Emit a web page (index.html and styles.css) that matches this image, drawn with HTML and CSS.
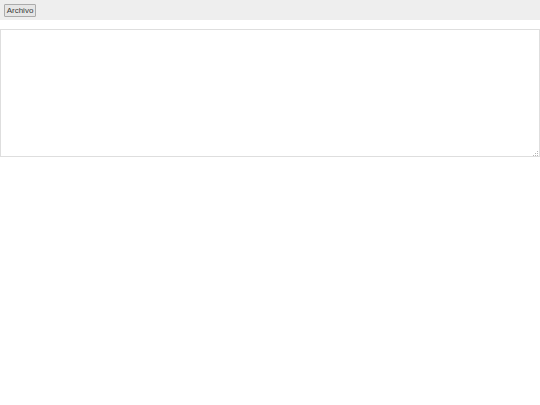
FILE: index.html
```html
<!DOCTYPE html>
<html>
<head>
<meta charset="utf-8">
<link rel="stylesheet" href="styles.css">
</head>
<body>
<div class="toolbar"><button class="menu-btn">Archivo</button></div>
<div class="editor-wrap">
  <textarea class="editor"></textarea>
  <svg class="grip" width="6" height="6" viewBox="0 0 6 6">
    <rect x="4" y="0" width="1" height="1" fill="#b5b5b5"/>
    <rect x="2" y="2" width="1" height="1" fill="#b5b5b5"/>
    <rect x="4" y="2" width="1" height="1" fill="#b5b5b5"/>
    <rect x="0" y="4" width="1" height="1" fill="#b5b5b5"/>
    <rect x="2" y="4" width="1" height="1" fill="#b5b5b5"/>
    <rect x="4" y="4" width="1" height="1" fill="#b5b5b5"/>
  </svg>
</div>
</body>
</html>
```
FILE: styles.css
```css
html, body { margin: 0; padding: 0; background: #fff; }
body { font-family: "Liberation Sans", Arial, sans-serif; }
.toolbar {
  background: #eeeeee;
  height: 20px;
  box-sizing: border-box;
  padding: 4px;
  display: flex;
  align-items: flex-start;
}
.menu-btn {
  font-family: "Liberation Sans", Arial, sans-serif;
  font-size: 8px;
  font-weight: normal;
  height: 13px;
  width: 32px;
  padding: 0;
  margin: 0;
  background: #e6e6e6;
  border: 1px solid #ababab;
  border-radius: 1px;
  color: #3a3a3a;
  line-height: 11px;
}
.editor-wrap {
  position: relative;
  margin-top: 9px;
}
.editor {
  display: block;
  margin: 0;
  width: 100%;
  height: 128px;
  box-sizing: border-box;
  border: 1px solid #dedede;
  padding: 2px;
  resize: none;
  outline: none;
}
.grip {
  position: absolute;
  right: 1px;
  bottom: 0;
}
```
